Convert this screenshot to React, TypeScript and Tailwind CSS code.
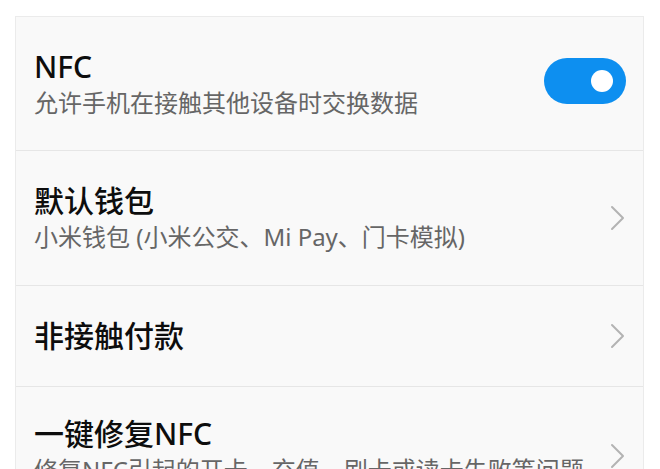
import React from "react";

const font = { fontFamily: '"Noto Sans", "Noto Sans CJK SC", sans-serif' };

function Chevron() {
  return (
    <svg width="16" height="26" viewBox="0 0 16 26" className="shrink-0">
      <path d="M2 2 L13 13 L2 24" fill="none" stroke="#b3b3b3" strokeWidth="2" strokeLinecap="round" strokeLinejoin="round" />
    </svg>
  );
}

function Row({ title, sub, h, right, last }: { title: string; sub?: string; h: string; right: React.ReactNode; last?: boolean }) {
  return (
    <div className={`flex items-center justify-between pl-[18px] pr-[17px] ${h} ${last ? "" : "border-b border-[#e6e6e6]"}`}>
      <div className="flex flex-col">
        <div className="text-[30px] leading-[38px] font-medium text-[#0d0d0d]">{title}</div>
        {sub && <div className="text-[24px] leading-[34px] text-[#666666] whitespace-nowrap">{sub}</div>}
      </div>
      {right}
    </div>
  );
}

export default function App() {
  return (
    <div className="w-[660px] h-[469px] overflow-hidden bg-white pt-4 pl-[15px] pr-4" style={font}>
      <div className="bg-[#f9f9f9] border-l border-r border-t border-[#ebebeb]">
        <Row
          title="NFC"
          sub="允许手机在接触其他设备时交换数据"
          h="h-[134px]"
          right={
            <div className="w-[82px] h-[46px] rounded-full bg-[#0d8ff0] flex items-center justify-end pr-[13px] mb-[5px]">
              <div className="w-[22px] h-[22px] rounded-full bg-white" />
            </div>
          }
        />
        <Row title="默认钱包" sub="小米钱包 (小米公交、Mi Pay、门卡模拟)" h="h-[135px]" right={<Chevron />} />
        <Row title="非接触付款" h="h-[101px]" right={<Chevron />} />
        <div className="flex items-start justify-between pl-[18px] pr-[17px] pt-[28px]">
          <div className="flex flex-col">
            <div className="text-[30px] leading-[38px] font-medium text-[#0d0d0d]">一键修复NFC</div>
            <div className="text-[24px] leading-[34px] text-[#666666] whitespace-nowrap">修复NFC引起的开卡、充值、刷卡或读卡失败等问题</div>
          </div>
          <div className="pt-[28px]"><Chevron /></div>
        </div>
      </div>
    </div>
  );
}
